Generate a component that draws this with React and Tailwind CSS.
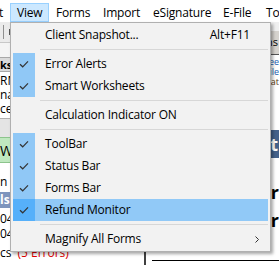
import React from 'react'

const menuFont = { fontFamily: '"Segoe UI", "Open Sans", "Noto Sans", sans-serif' }

const viewItems = [
  { type: 'item', label: 'Client Snapshot...', shortcut: 'Alt+F11' },
  { type: 'sep' },
  { type: 'item', label: 'Error Alerts', checked: true },
  { type: 'item', label: 'Smart Worksheets', checked: true },
  { type: 'sep' },
  { type: 'item', label: 'Calculation Indicator ON' },
  { type: 'sep' },
  { type: 'item', label: 'ToolBar', checked: true },
  { type: 'item', label: 'Status Bar', checked: true },
  { type: 'item', label: 'Forms Bar', checked: true },
  { type: 'item', label: 'Refund Monitor', checked: true, hover: true },
  { type: 'sep' },
  { type: 'item', label: 'Magnify All Forms', submenu: true },
]

function Check() {
  return (
    <svg width="10" height="8" viewBox="0 0 10 8" fill="none">
      <path d="M1 4.2 L3.7 6.8 L9 1.3" stroke="#333" strokeWidth="1.2" />
    </svg>
  )
}

function MenuRow({ item }) {
  if (item.type === 'sep') {
    return (
      <div className="h-[7px] flex items-center">
        <div className="ml-[27px] flex-1 h-px bg-[#d7d7d7]"></div>
      </div>
    )
  }
  return (
    <div className={`h-[22px] flex items-center ${item.hover ? 'bg-[#91c9f7]' : ''}`}>
      <div
        className={`w-[22px] h-full flex items-center justify-center ${
          item.checked ? (item.hover ? 'bg-[#56b0fa]' : 'bg-[#90c8f6]') : ''
        }`}
      >
        {item.checked && <Check />}
      </div>
      <span className="ml-[10px] flex-1 whitespace-nowrap tracking-[-0.2px]">{item.label}</span>
      {item.shortcut && <span className="mr-[18px] tracking-[-0.2px]">{item.shortcut}</span>}
      {item.submenu && (
        <svg className="mr-[9px]" width="4" height="7" viewBox="0 0 4 7" fill="none">
          <path d="M0.5 0.5 L3.5 3.5 L0.5 6.5" stroke="#333" strokeWidth="1" />
        </svg>
      )}
    </div>
  )
}

export default function App() {
  return (
    <div
      className="relative w-[279px] h-[265px] overflow-hidden bg-white text-black text-[12px]"
      style={menuFont}
    >
      {/* menu bar */}
      <div className="h-[22px] flex items-start pt-[3px] bg-white whitespace-nowrap tracking-[-0.2px] overflow-hidden">
        <div className="w-[10px] shrink-0 h-[19px] overflow-hidden flex justify-end items-center pr-[7px]">
          <span>Edit</span>
        </div>
        <div className="w-[39px] shrink-0 h-[19px] flex items-center pl-[6px] bg-[#cce8ff] border border-[#99d1ff]">View</div>
        <div className="w-[47px] shrink-0 h-[19px] flex items-center pl-[7px]">Forms</div>
        <div className="w-[50px] shrink-0 h-[19px] flex items-center pl-[7px]">Import</div>
        <div className="w-[70px] shrink-0 h-[19px] flex items-center pl-[7px]">eSignature</div>
        <div className="w-[43px] shrink-0 h-[19px] flex items-center pl-[7px]">E-File</div>
        <div className="shrink-0 h-[19px] flex items-center pl-[7px]">Tools</div>
      </div>

      {/* application behind the menu */}
      <div className="flex h-[243px]">
        <div className="w-[146px] flex flex-col border-r-[2px] border-[#404040] overflow-hidden whitespace-nowrap">
          <div className="h-[20px] bg-[#ebebeb] flex items-center">
            <div className="ml-[3px] w-px h-[14px] bg-[#8f8f8f]"></div>
            <div className="ml-[5px] w-px h-[6px] bg-[#555]"></div>
          </div>
          <div className="h-[15px] bg-[#f4f4f4] border-t border-[#c8c8c8]"></div>
          <div className="h-[15px] bg-[#dadada] border-y border-[#a8a8a8] flex items-center font-bold text-[11px] leading-none">
            ks
          </div>
          <div className="h-[46px] pt-[2px] leading-[14px]">
            <div>RM</div>
            <div>nat</div>
            <div>ce</div>
          </div>
          <div className="h-[19px] bg-[#e4e4e4] border-t border-[#b0b0b0]"></div>
          <div className="h-[26px] bg-[#bfe8bf] border-y border-[#8cc48c] flex items-center text-[14px]">Wh</div>
          <div className="h-[29px] pt-[12px] leading-[14px]">n F</div>
          <div className="h-[16px] bg-[#7e95bd] text-white font-bold flex items-center leading-none">lsc</div>
          <div className="pt-[3px] leading-[15px]">
            <div>04</div>
            <div>04</div>
          </div>
          <div className="mt-[5px] leading-[13px]">
            cs<span className="ml-[6px] text-[#e00000]">(5 Errors)</span>
          </div>
        </div>

        <div className="flex-1 flex flex-col overflow-hidden whitespace-nowrap">
          <div className="h-[9px] bg-[#f0f0f0]"></div>
          <div className="h-[24px] bg-[#d6d3ce] border-b border-[#555] flex items-center justify-end pr-[1px] text-[11px]">
            Options
          </div>
          <div className="h-[75px] flex flex-col items-end text-[9px] leading-[10px] pt-[2px]">
            <div className="text-[#1a5fb4]">Free</div>
            <div className="text-[#1a5fb4]">File</div>
            <div className="text-[#5a3a10]">Stat</div>
          </div>
          <div className="h-[28px] bg-[#44618a] flex items-center justify-end text-white font-bold text-[18px] pr-[1px]">
            Net
          </div>
          <div className="flex-1 flex flex-col items-end font-bold text-[18px] leading-[28px] pt-[20px]">
            <div>Er</div>
            <div>Er</div>
          </div>
          <div className="ml-[6px] h-px bg-black"></div>
          <div className="h-[4px]"></div>
        </div>
      </div>

      {/* View dropdown */}
      <div className="absolute left-[10px] top-[22px] w-[261px] h-[230px] bg-[#f2f2f2] border border-[#b0b0b0] shadow-[2px_2px_3px_rgba(0,0,0,0.35)] px-[2px] py-[1px]">
        {viewItems.map((item, i) => (
          <MenuRow key={i} item={item} />
        ))}
      </div>
    </div>
  )
}
